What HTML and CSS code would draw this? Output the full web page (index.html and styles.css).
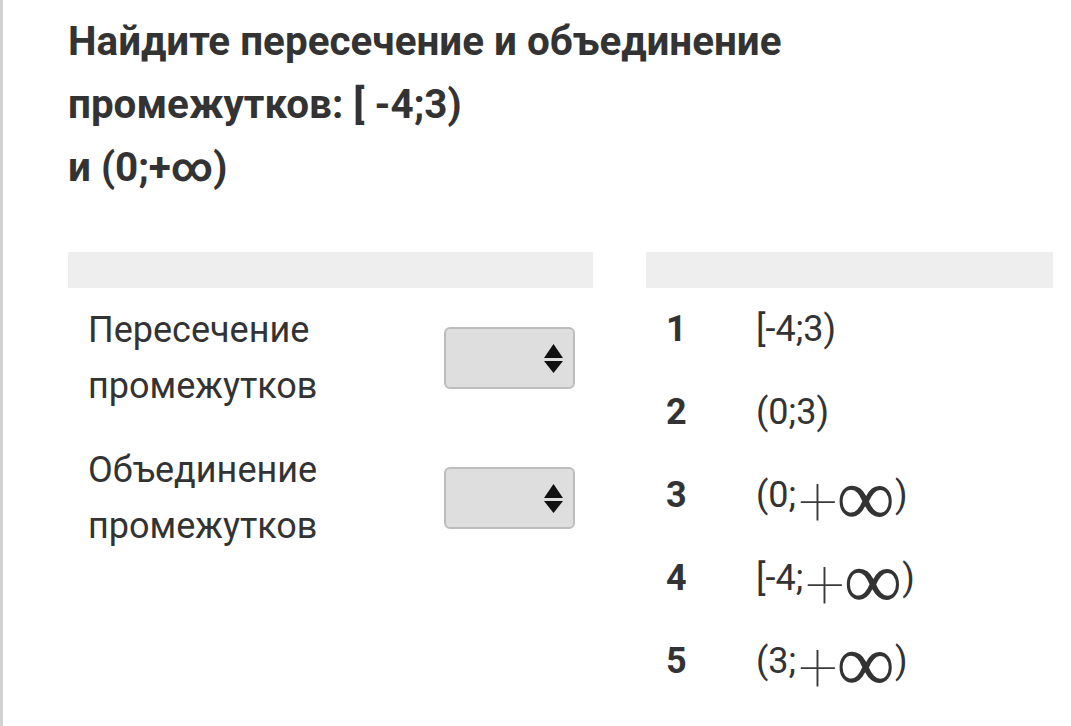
FILE: index.html
```html
<!DOCTYPE html>
<html lang="ru">
<head>
<meta charset="utf-8">
<title>Пересечение и объединение промежутков</title>
<link rel="stylesheet" href="styles.css">
</head>
<body>
<div class="page">
  <h1 class="title">Найдите пересечение и объединение<br>промежутков: [ -4;3)<br>и (0;+∞)</h1>
  <div class="columns">
    <div class="col col-left">
      <div class="col-head"></div>
      <div class="rows-left">
        <div class="q-row">
          <div class="q-label">Пересечение<br>промежутков</div>
          <div class="select">
            <svg class="arrows" width="19" height="29" viewBox="0 0 19 29"><polygon points="9.5,0 19,14 0,14" fill="#111"/><polygon points="0,17 19,17 9.5,29" fill="#111"/></svg>
          </div>
        </div>
        <div class="q-row">
          <div class="q-label">Объединение<br>промежутков</div>
          <div class="select">
            <svg class="arrows" width="19" height="29" viewBox="0 0 19 29"><polygon points="9.5,0 19,14 0,14" fill="#111"/><polygon points="0,17 19,17 9.5,29" fill="#111"/></svg>
          </div>
        </div>
      </div>
    </div>
    <div class="col col-right">
      <div class="col-head"></div>
      <ol class="answers">
        <li class="a-row"><span class="num">1</span><span class="val">[-4;3)</span></li>
        <li class="a-row"><span class="num">2</span><span class="val">(0;3)</span></li>
        <li class="a-row"><span class="num">3</span><span class="val">(0;<span class="plus">+</span><span class="inf">∞</span>)</span></li>
        <li class="a-row"><span class="num">4</span><span class="val">[-4;<span class="plus">+</span><span class="inf">∞</span>)</span></li>
        <li class="a-row"><span class="num">5</span><span class="val">(3;<span class="plus">+</span><span class="inf">∞</span>)</span></li>
      </ol>
    </div>
  </div>
</div>
</body>
</html>
```

FILE: styles.css
```css
html, body {
  margin: 0;
  padding: 0;
  background: #fff;
}
body {
  font-family: Roboto, "Liberation Sans", sans-serif;
  color: #333;
  min-height: 726px;
  border-left: 3px solid #d2d2d2;
  box-sizing: border-box;
}
.page {
  padding: 10px 18px 0 65px;
}
.title {
  margin: 0;
  font-size: 40.4px;
  font-weight: 700;
  line-height: 63px;
  color: #333;
}
.columns {
  display: grid;
  grid-template-columns: 525px 407px;
  column-gap: 53px;
  margin-top: 53px;
}
.col-head {
  height: 36px;
  background: #eeeeee;
}
.rows-left {
  display: flex;
  flex-direction: column;
  gap: 28px;
  padding: 14px 18px 0 20px;
}
.q-row {
  display: flex;
  align-items: center;
  justify-content: space-between;
}
.q-label {
  font-size: 36px;
  line-height: 56px;
}
.select {
  width: 131px;
  height: 62px;
  box-sizing: border-box;
  border: 2px solid #bdbdbd;
  border-radius: 6px;
  background: #dedede;
  display: flex;
  align-items: center;
  justify-content: flex-end;
  padding-right: 10px;
}
.arrows {
  display: block;
}
.answers {
  list-style: none;
  margin: 0;
  padding: 0 0 0 20px;
}
.a-row {
  display: flex;
  align-items: baseline;
  height: 83px;
  font-size: 36px;
  line-height: 83px;
}
.num {
  font-weight: 700;
  width: 90px;
}
.plus {
  font-family: Roboto, "DejaVu Sans", sans-serif;
  font-weight: 250;
  font-size: 70px;
  line-height: 0;
  color: #3a3a3a;
  vertical-align: -18px;
  margin-left: 2px;
}
.inf {
  font-family: "Liberation Serif", "DejaVu Serif", serif;
  font-size: 82px;
  line-height: 0;
  color: #333;
  vertical-align: -18px;
  margin-left: -1px;
}
```
